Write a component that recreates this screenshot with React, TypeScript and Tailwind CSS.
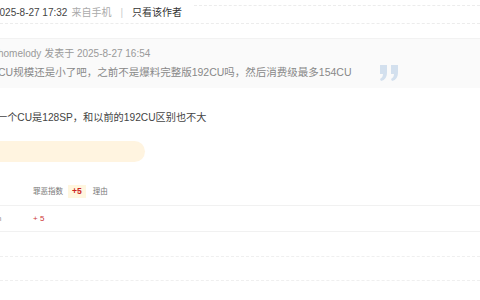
import React from 'react';

const font = { fontFamily: '"Liberation Sans", "Noto Sans CJK SC", sans-serif' };

const QuoteMark = () => (
  <svg width="22" height="18" viewBox="0 0 22 18" className="shrink-0">
    <path d="M2 1h7v7c0 5-2 8-6 9l-1-2c2-1 3-3 3-5H2z" fill="#d3e0ee" />
    <path d="M13 1h7v7c0 5-2 8-6 9l-1-2c2-1 3-3 3-5h-3z" fill="#d3e0ee" />
  </svg>
);

export default function App() {
  return (
    <div className="relative h-[300px] w-[480px] overflow-hidden bg-white" style={font}>
      {/* Post meta */}
      <div className="flex h-[23px] items-start">
        <div className="-ml-[6px] mt-[6px] flex items-center whitespace-nowrap text-[10px] leading-[14px]">
          <span className="text-[#444]">2025-8-27 17:32</span>
          <span className="ml-[4px] text-[#aaa]">来自手机</span>
          <span className="mx-[9px] text-[#ccc]">|</span>
          <span className="text-[#333]">只看该作者</span>
        </div>
        <div className="ml-[12px] mt-[5px] flex-1 border-t border-dashed border-[#ececec]" />
      </div>
      <div className="border-t border-dashed border-[#ececec]" />

      {/* Quote */}
      <div className="mt-[14px] h-[50px] border-t border-[#f2f2f2] bg-[#fafafa]">
        <div className="flex">
          <div className="-ml-[2px] flex flex-col leading-[19px]">
            <div className="mt-[5px] whitespace-nowrap text-[10px] text-[#999]">homelody 发表于 2025-8-27 16:54</div>
            <div className="whitespace-nowrap text-[10.5px] text-[#888]">
              CU规模还是小了吧，之前不是爆料完整版192CU吗，然后消费级最多154CU
            </div>
          </div>
          <div className="ml-[26px] mt-[25px]">
            <QuoteMark />
          </div>
        </div>
      </div>

      {/* Body */}
      <div className="-ml-[3px] mt-[23px] whitespace-nowrap text-[10.2px] leading-[14px] text-[#444]">
        一个CU是128SP，和以前的192CU区别也不大
      </div>

      <div className="mt-[16px] h-[21px] w-[145px] rounded-r-full bg-[#fff4e0]" />

      {/* Rating */}
      <div className="mt-[22px] flex h-[15px] items-center pl-[33px] text-[7.5px] text-[#777]">
        <span>罪恶指数</span>
        <span className="ml-[5px] bg-[#fff6df] px-[4px] text-[8.5px] font-bold leading-[13px] text-[#cc2222]">+5</span>
        <span className="ml-[7px]">理由</span>
      </div>
      <div className="mt-[6px] border-t border-[#f1f1f1]" />
      <div className="flex h-[25px] items-center text-[8px]">
        <span className="-ml-[3px] w-[36px] text-[#999]">n</span>
        <span className="text-[#cc3333]">+ 5</span>
      </div>
      <div className="border-t border-[#f1f1f1]" />

      <div className="mt-[24px] border-t border-dashed border-[#efefef]" />
      <div className="mt-[23px] border-t border-dashed border-[#efefef]" />
    </div>
  );
}
